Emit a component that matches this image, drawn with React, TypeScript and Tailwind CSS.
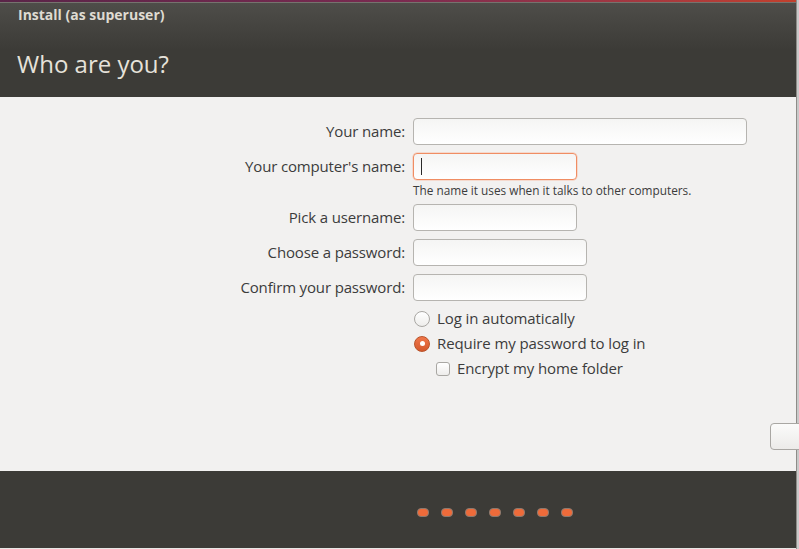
import React from "react";

const font = { fontFamily: '"Open Sans", "Noto Sans", "DejaVu Sans", sans-serif' };

function Field({ label, width, focused }: { label: string; width: string; focused?: boolean }) {
  return (
    <div className="flex items-center h-[27px]">
      <div className="w-[406px] pr-[1px] text-right text-[15px] text-[#3c3c3c] leading-none tracking-[-0.15px]">{label}</div>
      <div
        className={`ml-[7px] h-[27px] ${width} rounded-[4px] border bg-gradient-to-b from-[#f5f5f4] to-[#ffffff] ${
          focused ? "border-[#f08d63] shadow-[0_0_0_0.5px_#f7c2a9]" : "border-[#b6b4b0]"
        } flex items-center`}
      >
        {focused && <div className="ml-[7px] w-[1px] h-[17px] bg-[#2a2a2a]" />}
      </div>
    </div>
  );
}

export default function App() {
  return (
    <div className="w-[799px] h-[549px] flex bg-[#d9d9d9] overflow-hidden" style={font}>
      <div className="w-[796px] h-[549px] flex flex-col">
        <div className="h-[2px] bg-gradient-to-r from-[#5a2448] via-[#7a2a50] to-[#c2402c]" />
        <div className="h-[1px] bg-[#75736e]" />
        <div className="h-[94px] bg-gradient-to-b from-[#4e4d49] via-[#3c3b37] to-[#3c3b37] flex flex-col">
          <div className="pl-[18px] pt-[4px] text-[14px] font-bold text-[#dfdbd2] leading-[16px] tracking-[0px]">
            Install (as superuser)
          </div>
          <div className="pl-[17px] pt-[26px] text-[24px] text-[#e6e2da] leading-[30px] tracking-[0px]">Who are you?</div>
        </div>
        <div className="h-[374px] bg-[#f2f1f0] flex flex-col pt-[21px] relative">
          <Field label="Your name:" width="w-[334px]" />
          <div className="h-[8px]" />
          <Field label="Your computer's name:" width="w-[164px]" focused />
          <div className="pl-[413px] mt-[3px] h-[14px] text-[11.8px] leading-[14px] text-[#3c3c3c]">
            The name it uses when it talks to other computers.
          </div>
          <div className="h-[7px]" />
          <Field label="Pick a username:" width="w-[164px]" />
          <div className="h-[8px]" />
          <Field label="Choose a password:" width="w-[174px]" />
          <div className="h-[8px]" />
          <Field label="Confirm your password:" width="w-[174px]" />
          <div className="h-[5px]" />
          <div className="pl-[414px] flex flex-col">
            <div className="h-[25px] flex items-center">
              <div className="w-[16px] h-[16px] rounded-full border border-[#a9a7a3] bg-gradient-to-b from-[#ffffff] to-[#eeedeb]" />
              <span className="ml-[7px] text-[15px] tracking-[-0.1px] text-[#3c3c3c]">Log in automatically</span>
            </div>
            <div className="h-[25px] flex items-center">
              <div className="w-[16px] h-[16px] rounded-full border border-[#b9532a] bg-gradient-to-b from-[#f0774a] to-[#d4582b] flex items-center justify-center">
                <div className="w-[5px] h-[5px] rounded-full bg-white" />
              </div>
              <span className="ml-[7px] text-[15px] tracking-[-0.1px] text-[#3c3c3c]">Require my password to log in</span>
            </div>
            <div className="h-[25px] flex items-center pl-[22px]">
              <div className="w-[14px] h-[14px] rounded-[3px] border border-[#a9a7a3] bg-gradient-to-b from-[#ffffff] to-[#eeedeb]" />
              <span className="ml-[7px] text-[15px] tracking-[-0.1px] text-[#3c3c3c]">Encrypt my home folder</span>
            </div>
          </div>
          <div className="absolute left-[770px] top-[326px] w-[40px] h-[27px] rounded-[4px] border border-[#a9a7a3] bg-gradient-to-b from-[#fbfbfa] to-[#ecebe9]" />
        </div>
        <div className="h-[77px] bg-[#3c3b37] flex items-center pl-[417px]">
          <div className="mt-[5px] flex gap-[12px]">
            {[0, 1, 2, 3, 4, 5, 6].map((i) => (
              <div key={i} className="w-[12px] h-[9px] rounded-[4px] bg-[#ee6b3a] border border-[#8a7a70]" />
            ))}
          </div>
        </div>
        <div className="h-[1px] bg-[#e8e7e5]" />
      </div>
      <div className="w-[1px] h-full bg-[#8e8c88]" />
      <div className="w-[2px] h-full bg-[#c9c9c9]" />
    </div>
  );
}
